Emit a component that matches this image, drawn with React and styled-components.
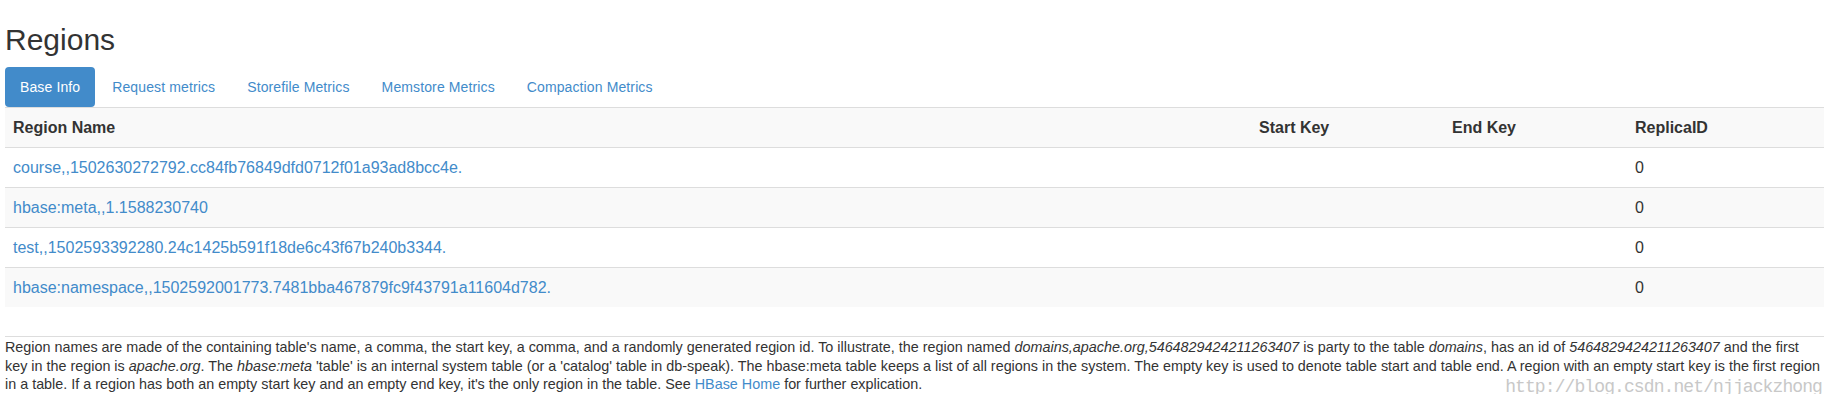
import React, { useState } from "react";
import styled, { createGlobalStyle } from "styled-components";

const GlobalStyle = createGlobalStyle`
  body {
    margin: 0;
    background: #fff;
    color: #333;
    font-family: "Liberation Sans", Arial, sans-serif;
    font-size: 14px;
    line-height: 1.42857;
  }
  * {
    box-sizing: border-box;
  }
`;

const Page = styled.div`
  padding: 0 12px 0 5px;
`;

const Title = styled.h2`
  margin: 23px 0 11px;
  font-size: 30px;
  line-height: 33px;
  font-weight: 400;
  color: #333;
`;

const Tabs = styled.ul`
  display: flex;
  gap: 2px;
  margin: 0;
  padding: 0;
  list-style: none;
`;

const Tab = styled.li`
  a {
    display: block;
    padding: 10px 15px;
    line-height: 20px;
    font-size: 14px;
    letter-spacing: 0.12px;
    border-radius: 4px;
    text-decoration: none;
    cursor: pointer;
    color: ${(p) => (p.$active ? "#fff" : "#428bca")};
    background: ${(p) => (p.$active ? "#428bca" : "transparent")};
  }
`;

const Table = styled.table`
  width: 100%;
  table-layout: fixed;
  border-collapse: collapse;
  border-spacing: 0;
  margin-bottom: 29px;
  font-size: 16px;
  line-height: 23px;

  th,
  td {
    padding: 8px;
    text-align: left;
    vertical-align: top;
    border-top: 1px solid #ddd;
  }

  th {
    font-weight: 700;
  }

  thead tr {
    background: #f9f9f9;
  }

  tbody tr:nth-child(even) {
    background: #f9f9f9;
  }

  a {
    color: #428bca;
    text-decoration: none;
  }
`;

const Footer = styled.div`
  position: relative;
  border-top: 1px solid #ddd;
  padding-top: 1px;
  font-size: 14.36px;
  line-height: 18.7px;
  color: #333;

  a {
    color: #428bca;
    text-decoration: none;
  }
`;

const Watermark = styled.span`
  position: absolute;
  right: 2px;
  bottom: -3px;
  font-family: "Liberation Mono", "Courier New", monospace;
  font-size: 18px;
  letter-spacing: -0.9px;
  line-height: 20px;
  color: #c8c8c8;
  white-space: nowrap;
  pointer-events: none;
`;

const tabs = [
  "Base Info",
  "Request metrics",
  "Storefile Metrics",
  "Memstore Metrics",
  "Compaction Metrics",
];

const regions = [
  "course,,1502630272792.cc84fb76849dfd0712f01a93ad8bcc4e.",
  "hbase:meta,,1.1588230740",
  "test,,1502593392280.24c1425b591f18de6c43f67b240b3344.",
  "hbase:namespace,,1502592001773.7481bba467879fc9f43791a11604d782.",
];

function App() {
  const [active, setActive] = useState(0);

  return (
    <Page>
      <GlobalStyle />
      <Title>Regions</Title>
      <Tabs>
        {tabs.map((t, i) => (
          <Tab key={t} $active={i === active}>
            <a onClick={() => setActive(i)}>{t}</a>
          </Tab>
        ))}
      </Tabs>
      <Table>
        <colgroup>
          <col style={{ width: 1246 }} />
          <col style={{ width: 193 }} />
          <col style={{ width: 183 }} />
          <col />
        </colgroup>
        <thead>
          <tr>
            <th>Region Name</th>
            <th>Start Key</th>
            <th>End Key</th>
            <th>ReplicaID</th>
          </tr>
        </thead>
        <tbody>
          {regions.map((r) => (
            <tr key={r}>
              <td>
                <a href="#">{r}</a>
              </td>
              <td></td>
              <td></td>
              <td>0</td>
            </tr>
          ))}
        </tbody>
      </Table>
      <Footer>
        Region names are made of the containing table's name, a comma, the start key, a
        comma, and a randomly generated region id. To illustrate, the region named{" "}
        <em>domains,apache.org,5464829424211263407</em> is party to the table{" "}
        <em>domains</em>, has an id of <em>5464829424211263407</em> and the first key in
        the region is <em>apache.org</em>. The <em>hbase:meta</em> 'table' is an internal
        system table (or a 'catalog' table in db-speak). The hbase:meta table keeps a list
        of all regions in the system. The empty key is used to denote table start and table
        end. A region with an empty start key is the first region in a table. If a region
        has both an empty start key and an empty end key, it's the only region in the
        table. See <a href="#">HBase Home</a> for further explication.
        <Watermark>http://blog.csdn.net/njjackzhong</Watermark>
      </Footer>
    </Page>
  );
}

export default App;
